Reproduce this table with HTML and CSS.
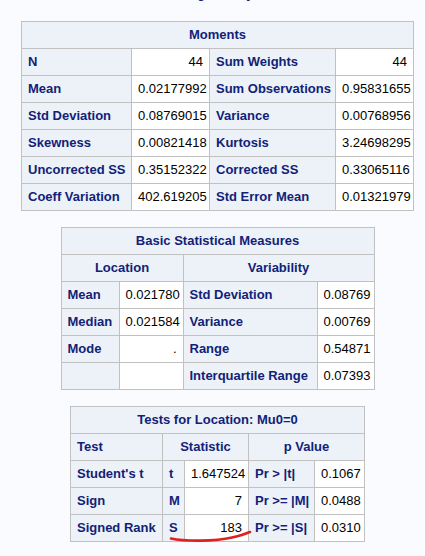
FILE: index.html
```html
<!DOCTYPE html>
<html>
<head>
<meta charset="utf-8">
<link rel="stylesheet" href="styles.css">
</head>
<body>
<div class="page">
  <div class="proc-title">Log Weekly</div>

  <table class="sas moments">
    <colgroup><col class="m1"><col class="m2"><col class="m3"><col class="m4"></colgroup>
    <tr><th class="title" colspan="4">Moments</th></tr>
    <tr><th>N</th><td>44</td><th>Sum Weights</th><td>44</td></tr>
    <tr><th>Mean</th><td>0.02177992</td><th>Sum Observations</th><td>0.95831655</td></tr>
    <tr><th>Std Deviation</th><td>0.08769015</td><th>Variance</th><td>0.00768956</td></tr>
    <tr><th>Skewness</th><td>0.00821418</td><th>Kurtosis</th><td>3.24698295</td></tr>
    <tr><th>Uncorrected SS</th><td>0.35152322</td><th>Corrected SS</th><td>0.33065116</td></tr>
    <tr><th>Coeff Variation</th><td>402.619205</td><th>Std Error Mean</th><td>0.01321979</td></tr>
  </table>

  <table class="sas basic">
    <colgroup><col class="b1"><col class="b2"><col class="b3"><col class="b4"></colgroup>
    <tr><th class="title" colspan="4">Basic Statistical Measures</th></tr>
    <tr><th class="center" colspan="2">Location</th><th class="center" colspan="2">Variability</th></tr>
    <tr><th>Mean</th><td>0.021780</td><th>Std Deviation</th><td>0.08769</td></tr>
    <tr><th>Median</th><td>0.021584</td><th>Variance</th><td>0.00769</td></tr>
    <tr><th>Mode</th><td>.</td><th>Range</th><td>0.54871</td></tr>
    <tr><th></th><td></td><th>Interquartile Range</th><td>0.07393</td></tr>
  </table>

  <div class="tests-wrap">
    <table class="sas tests">
      <colgroup><col class="t1"><col class="t2"><col class="t3"><col class="t4"><col class="t5"></colgroup>
      <tr><th class="title" colspan="5">Tests for Location: Mu0=0</th></tr>
      <tr><th>Test</th><th class="center" colspan="2">Statistic</th><th class="center" colspan="2">p Value</th></tr>
      <tr><th>Student's t</th><th>t</th><td>1.647524</td><th>Pr &gt; |t|</th><td>0.1067</td></tr>
      <tr><th>Sign</th><th>M</th><td>7</td><th>Pr &gt;= |M|</th><td>0.0488</td></tr>
      <tr><th>Signed Rank</th><th>S</th><td>183</td><th>Pr &gt;= |S|</th><td>0.0310</td></tr>
    </table>
    <svg class="mark" xmlns="http://www.w3.org/2000/svg">
      <path d="M101,132.5 C115,135.5 145,135.5 162,131.5 S177,126.5 180,126" fill="none" stroke="#e01f1f" stroke-width="2.6" stroke-linecap="round"/>
    </svg>
  </div>
</div>
</body>
</html>
```

FILE: styles.css
```css
html, body {
  margin: 0;
  padding: 0;
  background: #fafbfe;
}

body {
  font-family: "Liberation Sans", Arial, sans-serif;
  font-size: 13px;
  color: #000;
}

.page {
  display: flex;
  flex-direction: column;
  align-items: center;
  padding-left: 10px;
}

.proc-title {
  margin-top: -14px;
  height: 16px;
  line-height: 16px;
  font-weight: bold;
  color: #112277;
  margin-bottom: 19px;
}

.sas {
  border-collapse: collapse;
  table-layout: fixed;
  border: 1px solid #c1c1c1;
}

.sas + .sas,
.sas + .tests-wrap {
  margin-top: 16px;
}

.sas th,
.sas td {
  border: 1px solid #c1c1c1;
  padding: 5px 6px;
  line-height: 16px;
  height: 16px;
  white-space: nowrap;
  overflow: hidden;
}

.sas th {
  background: #edf2f9;
  color: #112277;
  font-weight: bold;
  text-align: left;
}

.sas th.title,
.sas th.center {
  text-align: center;
}

.sas td {
  background: #ffffff;
  text-align: right;
}

.moments { width: 393px; }
.m1 { width: 110px; }
.m2 { width: 78px; }
.m3 { width: 126px; }
.m4 { width: 78px; }

.basic { width: 314px; }
.b1 { width: 58px; }
.b2 { width: 64px; }
.b3 { width: 134px; }
.b4 { width: 57px; }

.tests-wrap {
  position: relative;
}

.tests { width: 295px; }
.t1 { width: 92px; }
.t2 { width: 22px; }
.t3 { width: 64px; }
.t4 { width: 66px; }
.t5 { width: 50px; }

.mark {
  position: absolute;
  left: 0;
  top: 0;
  width: 100%;
  height: 100%;
  overflow: visible;
  pointer-events: none;
}
```
